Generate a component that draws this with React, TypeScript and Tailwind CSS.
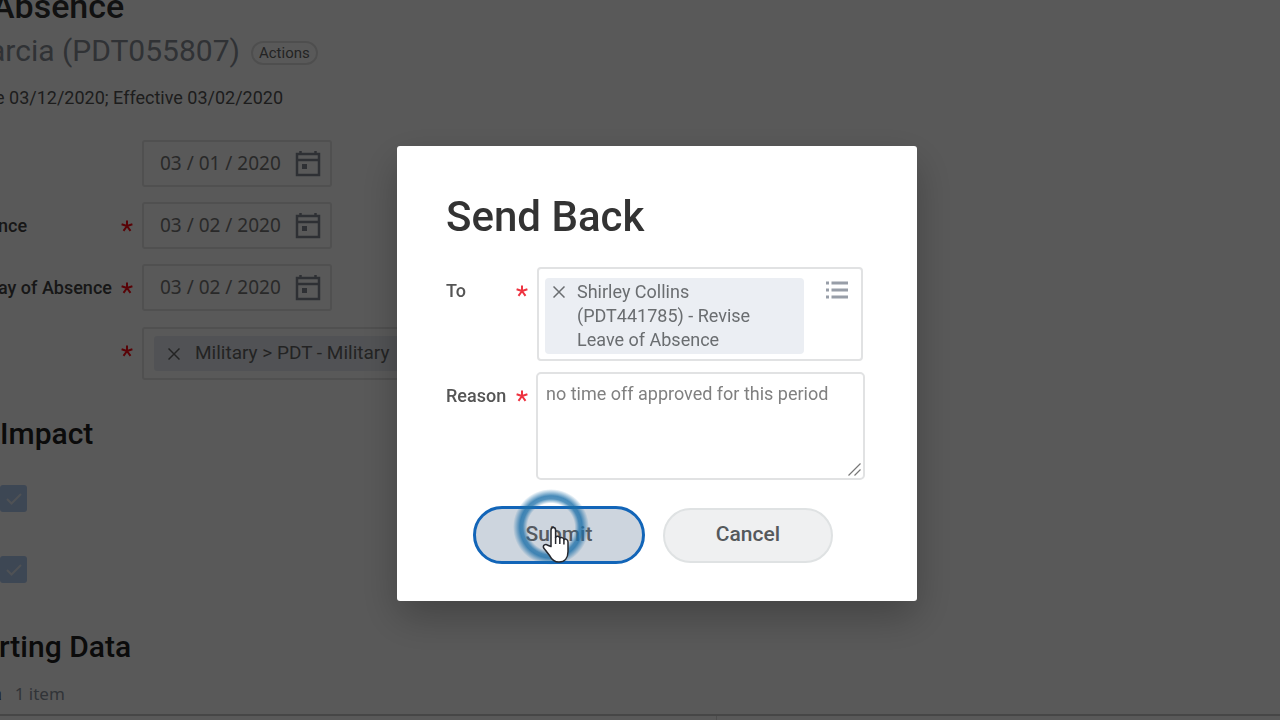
import React, { useState } from 'react';

function Required({ className = '' }: { className?: string }) {
  return (
    <svg viewBox="0 0 12 12" className={`h-3 w-3 shrink-0 ${className}`} fill="none" stroke="currentColor" strokeWidth="2" aria-hidden="true">
      <path d="M6 6V.4M6 6 .6 4.300M6 6l5.400-1.700M6 6l-3.500 4.800M6 6l3.500 4.800" />
    </svg>
  );
}

function CalendarIcon() {
  return (
    <svg viewBox="0 0 26 27" className="h-[27px] w-[26px]" fill="none" stroke="currentColor" strokeWidth="2.500" aria-hidden="true">
      <path d="M2 4h22v21H2zM2 10h22" />
      <path d="M5.500 1v4M20.500 1v4" />
      <path d="M7 14h5v5H7z" fill="currentColor" stroke="none" />
    </svg>
  );
}

function CloseIcon() {
  return (
    <svg viewBox="0 0 12 12" className="h-3 w-3" fill="none" stroke="currentColor" strokeWidth="1.500" aria-hidden="true">
      <path d="m.5.5 11 11M11.500.5l-11 11" />
    </svg>
  );
}

function ListIcon() {
  return (
    <svg viewBox="0 0 22 18" className="h-[18px] w-[22px]" fill="none" stroke="currentColor" strokeWidth="3" aria-hidden="true">
      <path d="M5.500 2H22M5.500 9H22M5.500 16H22" />
      <path d="M0 2h3M0 9h3M0 16h3" />
    </svg>
  );
}

interface DateRowProps {
  id: string;
  label?: string;
  required?: boolean;
  value: string;
}

function DateRow({ id, label, required = false, value }: DateRowProps) {
  const [date, setDate] = useState(value);
  return (
    <div className="flex items-center">
      <label htmlFor={id} className="-ml-0.5 flex w-36 items-center justify-between pr-[9px] text-[18px] leading-6 font-medium whitespace-nowrap text-[#444]">
        <span>{label}</span>
        {required && <Required className="text-[#ff0a14]" />}
      </label>
      <div className="flex h-[47px] w-[190px] items-center rounded-[3px] border-2 border-[#e4e4e4] pl-4 text-[#858b94]">
        <input
          id={id}
          aria-label={label || 'Date'}
          value={date}
          onChange={(e) => setDate(e.target.value)}
          className="w-[135px] bg-transparent font-['Noto_Sans',sans-serif] text-[19px] text-[#777] outline-none"
        />
        <button type="button" aria-label="Open calendar">
          <CalendarIcon />
        </button>
      </div>
    </div>
  );
}

function ImpactCheckbox({ label }: { label: string }) {
  return (
    <label className="grid h-[27px] w-[27px] place-items-center">
      <input
        type="checkbox"
        defaultChecked
        aria-label={label}
        className="col-start-1 row-start-1 h-[27px] w-[27px] appearance-none rounded-[3px] bg-[#aecaf0]"
      />
      <svg viewBox="0 0 16 12" className="col-start-1 row-start-1 h-3 w-4" fill="none" stroke="#e2e8f2" strokeWidth="2" aria-hidden="true">
        <path d="m1 6 4.500 4.500L15 1" />
      </svg>
    </label>
  );
}

function AbsencePage() {
  return (
    <main className="h-screen overflow-hidden bg-white">
      <header>
        <h1 className="-mt-[9px] -ml-2 text-[34px] leading-[30px] font-medium text-[#333]">Absence</h1>
        <div className="mt-3 -ml-[11px] flex items-center gap-[11px]">
          <h2 className="text-[30px] leading-9 text-[#8a9099]">arcia (PDT055807)</h2>
          <button type="button" className="mt-1 h-6 rounded-full border-2 border-[#e0e0e0] px-1.5 text-[15px] leading-4 text-[#666]">
            Actions
          </button>
        </div>
        <p className="mt-[17px] -ml-[5px] text-[18px] leading-6 text-[#555]">e 03/12/2020; Effective 03/02/2020</p>
      </header>

      <section className="mt-[30px] flex flex-col gap-[15px]">
        <DateRow id="last-day" value="03 / 01 / 2020" />
        <DateRow id="first-day" label="nce" required value="03 / 02 / 2020" />
        <DateRow id="estimated-day" label="ay of Absence" required value="03 / 02 / 2020" />
        <div className="flex pt-px">
          <div className="flex w-[142px] justify-end pt-[18px] pr-[9px]">
            <Required className="text-[#ff0a14]" />
          </div>
          <div className="h-[53px] w-[328px] rounded-[3px] border-2 border-[#e4e4e4] px-2.5 py-[7px]">
            <div className="flex h-[35px] items-center gap-[15px] rounded-[3px] bg-[#e9ecf2] pl-3.5 text-[19px] whitespace-nowrap text-[#666]">
              <button type="button" aria-label="Remove Military">
                <CloseIcon />
              </button>
              <span>Military &gt; PDT - Military</span>
            </div>
          </div>
        </div>
      </section>

      <section className="mt-9">
        <h3 className="text-[30px] leading-9 font-medium text-[#222]">Impact</h3>
        <div className="mt-[33px] flex flex-col gap-11">
          <ImpactCheckbox label="Payroll impact" />
          <ImpactCheckbox label="Benefits impact" />
        </div>
      </section>

      <section className="mt-[46px]">
        <h3 className="-ml-px text-[30px] leading-9 font-medium text-[#222]">rting Data</h3>
        <p className="mt-[17px] -ml-2 flex gap-[13px] text-[18px] leading-6">
          <span className="font-medium text-[#555]">a</span>
          <span className="font-['Noto_Sans',sans-serif] text-[17px] text-[#8d94a0]">1 item</span>
        </p>
        <div className="mt-2 flex h-10 border-t-2 border-[#c8c8c8]">
          <div className="w-[56%] border-r border-[#dcdcdc]" />
        </div>
      </section>
    </main>
  );
}

function HandCursor() {
  return (
    <svg viewBox="0 0 28 38" className="absolute top-5 left-[69px] h-[38px] w-7" aria-hidden="true">
      <path
        d="M9 20.500V4.200C9 .7 13.600.7 13.600 4.200V11.500c.8-1.900 4-1.500 4.200.9 1-1.500 3.800-1 4.100 1.300 1.300-1.300 4.100-.5 4.100 2.300v9.500c0 6-3 10.500-9 10.500-5 0-7.300-2.400-9.200-6.200L1.700 22c-1.300-2.700 2-4.600 4-2.700z"
        fill="#fff"
        stroke="#26282e"
        strokeWidth="1.500"
        strokeLinejoin="round"
      />
      <path d="M13.600 11v7M17.800 12.500V18M21.900 14v4.500" stroke="#26282e" strokeWidth="1.500" fill="none" />
    </svg>
  );
}

function ClickRing() {
  return (
    <svg viewBox="0 0 76 76" className="absolute -top-[17px] left-10 h-[76px] w-[76px]" aria-hidden="true">
      <defs>
        <radialGradient id="click-ring">
          <stop offset="0.62" stopColor="#1a6ea8" stopOpacity="0" />
          <stop offset="0.74" stopColor="#1a6ea8" stopOpacity="0.75" />
          <stop offset="0.82" stopColor="#1a6ea8" stopOpacity="0.8" />
          <stop offset="1" stopColor="#1a6ea8" stopOpacity="0" />
        </radialGradient>
      </defs>
      <circle cx="38" cy="38" r="38" fill="url(#click-ring)" />
    </svg>
  );
}

function SendBackDialog() {
  const [reason, setReason] = useState('no time off approved for this period');
  return (
    <div className="fixed inset-0 flex items-center justify-center bg-black/65 pt-[27px] pl-[34px]">
      <form
        role="dialog"
        aria-modal="true"
        aria-labelledby="send-back-title"
        onSubmit={(e) => e.preventDefault()}
        className="w-[520px] rounded-[3px] bg-white pt-12 pr-[52px] pb-[37px] pl-[49px] shadow-[0_16px_40px_rgba(0,0,0,0.25)]"
      >
        <h2 id="send-back-title" className="text-[42px] leading-[46px] font-medium text-[#333]">
          Send Back
        </h2>

        <div className="mt-[27px] flex pr-0.5">
          <div className="flex w-[91px] shrink-0 items-center justify-between self-start pt-3 pr-[9px] text-[18px] leading-6 font-medium text-[#555]">
            <span id="to-label">To</span>
            <Required className="text-[#ee3340]" />
          </div>
          <div role="group" aria-labelledby="to-label" className="flex flex-1 items-start rounded-[4px] border-2 border-[#e1e2e3] px-1.5 pt-[9px] pb-[5px]">
            <div className="flex w-[259px] items-start gap-3 rounded-[4px] bg-[#ebeef3] py-0.5 pl-2 text-[18px] leading-6 text-[#6a6d70]">
              <button type="button" aria-label="Remove Shirley Collins" className="mt-1.5">
                <CloseIcon />
              </button>
              <span className="w-[190px]">Shirley Collins (PDT441785) - Revise Leave of Absence</span>
            </div>
            <button type="button" aria-label="Show options" className="mt-[3px] ml-[22px] text-[#989ea8]">
              <ListIcon />
            </button>
          </div>
        </div>

        <div className="mt-[11px] flex">
          <label htmlFor="reason" className="flex w-[90px] shrink-0 items-center justify-between self-start pt-3 pr-2 text-[18px] leading-6 font-medium text-[#555]">
            Reason
            <Required className="text-[#ee3340]" />
          </label>
          <div className="relative flex-1">
            <textarea
              id="reason"
              value={reason}
              onChange={(e) => setReason(e.target.value)}
              className="block h-[108px] w-full resize-none rounded-[5px] border-2 border-[#e1e2e3] px-2 py-2 text-[18px] leading-6 text-[#808080] outline-none"
            />
            <svg viewBox="0 0 13 13" className="pointer-events-none absolute right-1 bottom-1 h-[13px] w-[13px]" stroke="#777" strokeWidth="1.200" aria-hidden="true">
              <path d="M.5 12.500 12.500.5M6.500 12.500l6-6" />
            </svg>
          </div>
        </div>

        <div className="mt-[26px] flex items-center gap-[18px] pl-[27px]">
          <div className="relative">
            <button type="submit" className="block h-[58px] w-[172px] rounded-full border-[3px] border-[#1265b8] bg-[#cdd5de] text-[21px] font-medium text-[#555a60]">
              Submit
            </button>
            <div className="pointer-events-none absolute inset-0">
              <ClickRing />
              <HandCursor />
            </div>
          </div>
          <button type="button" className="h-[55px] w-[170px] rounded-full border-2 border-[#dfe2e3] bg-[#eff0f1] text-[21px] font-medium text-[#55595c]">
            Cancel
          </button>
        </div>
      </form>
    </div>
  );
}

export default function App() {
  return (
    <div className="font-[Roboto,sans-serif]">
      <AbsencePage />
      <SendBackDialog />
    </div>
  );
}
